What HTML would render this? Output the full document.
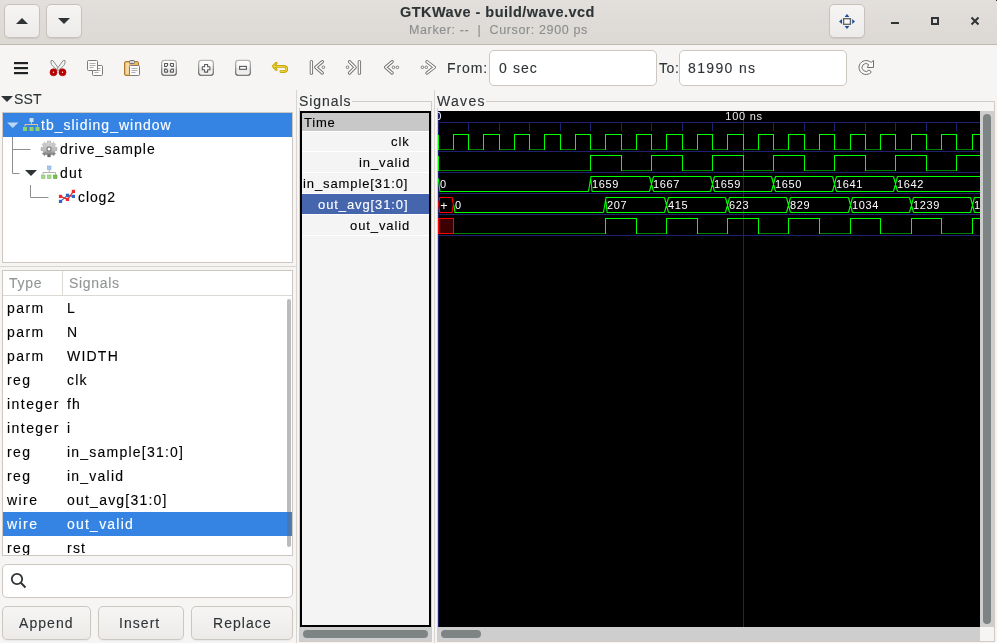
<!DOCTYPE html><html><head><meta charset="utf-8"><style>
*{margin:0;padding:0;box-sizing:border-box}
html,body{width:997px;height:643px;overflow:hidden;background:#f6f5f4;font-family:"Liberation Sans",sans-serif;color:#2e3436;position:relative}
.a{position:absolute}
.t{position:absolute;white-space:pre;line-height:1;will-change:transform;-webkit-text-stroke:0.12px currentColor}
</style></head><body><div class="a" style="left:0;top:0;width:997px;height:45px;background:linear-gradient(#e2dfdc,#dcd8d4);border-bottom:1px solid #c0b9b2"></div>
<div class="a" style="left:4px;top:4px;width:36px;height:34px;border-radius:5px;background:linear-gradient(#f6f5f4,#edebe9);border:1px solid #c9c2bc;box-shadow:0 1px 1px rgba(0,0,0,0.07)"></div>
<div class="a" style="left:46px;top:4px;width:36px;height:34px;border-radius:5px;background:linear-gradient(#f6f5f4,#edebe9);border:1px solid #c9c2bc;box-shadow:0 1px 1px rgba(0,0,0,0.07)"></div>
<div class="a" style="left:829px;top:4px;width:36px;height:34px;border-radius:5px;background:linear-gradient(#f6f5f4,#edebe9);border:1px solid #c9c2bc;box-shadow:0 1px 1px rgba(0,0,0,0.07)"></div>
<svg class="a" style="left:0;top:0" width="100" height="45"><polygon points="16,24 28,24 22,18" fill="#2e3436"/><polygon points="58,18 70,18 64,24" fill="#2e3436"/></svg>
<div class="t" style="left:400px;top:5.08px;font-size:14.5px;color:#2e3436;font-weight:700;letter-spacing:0.45px;">GTKWave - build/wave.vcd</div>
<div class="t" style="left:408.5px;top:23.86px;font-size:12.5px;color:#8b8e8f;font-weight:400;letter-spacing:0.62px;">Marker: --  |  Cursor: 2900 ps</div>
<svg class="a" style="left:830px;top:5px" width="34" height="32">
<rect x="13.6" y="13.7" width="6.8" height="5.6" fill="#fafafa" stroke="#5f5f5f" stroke-width="1.3"/>
<polygon points="17,9 14.6,11.9 19.4,11.9" fill="#1e4e9a"/>
<polygon points="17,23.9 14.6,21 19.4,21" fill="#1e4e9a"/>
<polygon points="9,16.5 12,14.1 12,18.9" fill="#1e4e9a"/>
<polygon points="25,16.5 22.2,14.1 22.2,18.9" fill="#1e4e9a"/>
</svg>
<svg class="a" style="left:880px;top:0" width="117" height="45">
<rect x="11" y="22" width="8" height="2" fill="#2e3436"/>
<rect x="52" y="18" width="6" height="6" fill="none" stroke="#2e3436" stroke-width="2"/>
<path d="M91.5,17.5 L98.5,24.5 M98.5,17.5 L91.5,24.5" stroke="#2e3436" stroke-width="2"/>
<rect x="116" y="0" width="1" height="1" fill="#333"/>
</svg>
<svg class="a" style="left:13px;top:59px" width="17" height="18" viewBox="0 0 17 18"><rect x="1" y="3" width="14" height="2.2" fill="#1f2324"/><rect x="1" y="8" width="14" height="2.2" fill="#1f2324"/><rect x="1" y="13" width="14" height="2.2" fill="#1f2324"/></svg>
<svg class="a" style="left:49px;top:59px" width="18" height="18" viewBox="0 0 18 18"><path d="M2,1.5 L3.8,1.5 L10.2,10.2 L9,11.5 Q2,6.5 2,4 Z" fill="#f2f2f0" stroke="#8c8c8a" stroke-width="1" stroke-linejoin="round"/>
<path d="M16,1.5 L14.2,1.5 L7.8,10.2 L9,11.5 Q16,6.5 16,4 Z" fill="#f2f2f0" stroke="#8c8c8a" stroke-width="1" stroke-linejoin="round"/>
<circle cx="4.5" cy="13.3" r="3.5" fill="#cc0000" stroke="#a40000" stroke-width="0.7"/>
<circle cx="13.5" cy="13.3" r="3.5" fill="#cc0000" stroke="#a40000" stroke-width="0.7"/>
<circle cx="4.5" cy="13.3" r="1.7" fill="none" stroke="#a00000" stroke-width="0.9"/><circle cx="13.5" cy="13.3" r="1.7" fill="none" stroke="#a00000" stroke-width="0.9"/>
<circle cx="4.5" cy="13.3" r="0.7" fill="#ffffff"/><circle cx="13.5" cy="13.3" r="0.7" fill="#ffffff"/></svg>
<svg class="a" style="left:86px;top:59px" width="18" height="18" viewBox="0 0 18 18"><rect x="6.5" y="6.5" width="10" height="10" rx="1" fill="#fbfbfb" stroke="#7c7c7c"/>
<path d="M8.5,9.5h6M8.5,11.5h6M8.5,13.5h4" stroke="#9a9a9a" stroke-width="0.8"/>
<rect x="1.5" y="1.5" width="10" height="10" rx="1" fill="#fbfbfb" stroke="#7c7c7c"/>
<path d="M3.5,4.5h6M3.5,6.5h6M3.5,8.5h4" stroke="#9a9a9a" stroke-width="0.8"/></svg>
<svg class="a" style="left:123px;top:59px" width="18" height="18" viewBox="0 0 18 18"><rect x="1.5" y="2.5" width="14" height="14" rx="1.5" fill="#e9b96e" stroke="#b07a2a"/>
<rect x="3" y="4" width="3" height="11" fill="#f3d9a8"/>
<rect x="6.5" y="1.5" width="5" height="3" rx="1" fill="#d8d8d8" stroke="#6c6c6c"/>
<rect x="6.5" y="6.5" width="10" height="10" rx="1" fill="#fbfbfb" stroke="#7c7c7c"/>
<path d="M8.5,9.5h6M8.5,11.5h6M8.5,13.5h4" stroke="#9a9a9a" stroke-width="0.8"/></svg>
<svg class="a" style="left:160px;top:59px" width="18" height="18" viewBox="0 0 18 18"><defs><linearGradient id="zfs" x1="0" y1="0" x2="0" y2="1"><stop offset="0" stop-color="#b4b4b2"/><stop offset="1" stop-color="#545452"/></linearGradient><linearGradient id="zff" x1="0" y1="0" x2="0" y2="1"><stop offset="0" stop-color="#ffffff"/><stop offset="0.5" stop-color="#f6f6f6"/><stop offset="0.55" stop-color="#e8e8e8"/><stop offset="1" stop-color="#f4f4f4"/></linearGradient></defs><rect x="1.7" y="1.4" width="14.6" height="14.9" rx="2.6" fill="url(#zff)" stroke="url(#zfs)" stroke-width="1.1"/><path d="M4.6,4.5h3v1.8l-1.2,1.2h-1.8z M13.4,4.5h-3v1.8l1.2,1.2h1.8z M4.6,13.1h3v-1.8l-1.2,-1.2h-1.8z M13.4,13.1h-3v-1.8l1.2,-1.2h1.8z" fill="#fcfcfc" stroke="#5a5a5a" stroke-width="1.1" stroke-linejoin="round"/></svg>
<svg class="a" style="left:197px;top:59px" width="18" height="18" viewBox="0 0 18 18"><defs><linearGradient id="zis" x1="0" y1="0" x2="0" y2="1"><stop offset="0" stop-color="#b4b4b2"/><stop offset="1" stop-color="#545452"/></linearGradient><linearGradient id="zif" x1="0" y1="0" x2="0" y2="1"><stop offset="0" stop-color="#ffffff"/><stop offset="0.5" stop-color="#f6f6f6"/><stop offset="0.55" stop-color="#e8e8e8"/><stop offset="1" stop-color="#f4f4f4"/></linearGradient></defs><rect x="1.7" y="1.4" width="14.6" height="14.9" rx="2.6" fill="url(#zif)" stroke="url(#zis)" stroke-width="1.1"/><path d="M7.6,5.5h3v2.3h2.3v3h-2.3v2.3h-3v-2.3h-2.3v-3h2.3z" fill="#fcfcfc" stroke="#5a5a5a" stroke-width="1.1" stroke-linejoin="round"/></svg>
<svg class="a" style="left:234px;top:59px" width="18" height="18" viewBox="0 0 18 18"><defs><linearGradient id="zos" x1="0" y1="0" x2="0" y2="1"><stop offset="0" stop-color="#b4b4b2"/><stop offset="1" stop-color="#545452"/></linearGradient><linearGradient id="zof" x1="0" y1="0" x2="0" y2="1"><stop offset="0" stop-color="#ffffff"/><stop offset="0.5" stop-color="#f6f6f6"/><stop offset="0.55" stop-color="#e8e8e8"/><stop offset="1" stop-color="#f4f4f4"/></linearGradient></defs><rect x="1.7" y="1.4" width="14.6" height="14.9" rx="2.6" fill="url(#zof)" stroke="url(#zos)" stroke-width="1.1"/><rect x="5.6" y="7.4" width="6.8" height="2.9" fill="#fcfcfc" stroke="#5a5a5a" stroke-width="1.1"/></svg>
<svg class="a" style="left:271px;top:59px" width="18" height="18" viewBox="0 0 18 18"><path d="M5.3,4.2 L2.1,7.4 L5.3,10.6 M2.6,7.4 H12.5 Q15.8,7.4 15.8,10 Q15.8,12.6 12.5,12.6 H9.8" stroke="#c4a000" stroke-width="2.6" fill="none" stroke-linejoin="round" stroke-linecap="round"/><path d="M5.3,4.2 L2.1,7.4 L5.3,10.6 M2.6,7.4 H12.5 Q15.8,7.4 15.8,10 Q15.8,12.6 12.5,12.6 H9.8" stroke="#f4dc40" stroke-width="1" fill="none" stroke-linejoin="round" stroke-linecap="round"/></svg>
<svg class="a" style="left:308px;top:59px" width="18" height="18" viewBox="0 0 18 18"><path d="M3.4,2.6V14.2" stroke="#6e6e6e" stroke-width="3.3" fill="none" stroke-linecap="round" stroke-linejoin="round"/><path d="M3.4,2.6V14.2" stroke="#fafafa" stroke-width="1.5" fill="none" stroke-linecap="round" stroke-linejoin="round"/><path d="M14.3,2.7L7.8,8.3L14.3,14" stroke="#6e6e6e" stroke-width="3.3" fill="none" stroke-linecap="round" stroke-linejoin="round"/><path d="M14.3,2.7L7.8,8.3L14.3,14" stroke="#fafafa" stroke-width="1.5" fill="none" stroke-linecap="round" stroke-linejoin="round"/><circle cx="15.4" cy="8.3" r="1.3" fill="#fafafa" stroke="#6e6e6e" stroke-width="0.9"/></svg>
<svg class="a" style="left:345px;top:59px" width="18" height="18" viewBox="0 0 18 18"><path d="M14.4,2.6V14.2" stroke="#6e6e6e" stroke-width="3.3" fill="none" stroke-linecap="round" stroke-linejoin="round"/><path d="M14.4,2.6V14.2" stroke="#fafafa" stroke-width="1.5" fill="none" stroke-linecap="round" stroke-linejoin="round"/><path d="M4.5,2.7L10.1,8.3L4.5,14" stroke="#6e6e6e" stroke-width="3.3" fill="none" stroke-linecap="round" stroke-linejoin="round"/><path d="M4.5,2.7L10.1,8.3L4.5,14" stroke="#fafafa" stroke-width="1.5" fill="none" stroke-linecap="round" stroke-linejoin="round"/><circle cx="2.5" cy="8.3" r="1.3" fill="#fafafa" stroke="#6e6e6e" stroke-width="0.9"/></svg>
<svg class="a" style="left:382px;top:59px" width="18" height="18" viewBox="0 0 18 18"><path d="M10.1,2.7L3.6,8.3L10.1,14" stroke="#6e6e6e" stroke-width="3.3" fill="none" stroke-linecap="round" stroke-linejoin="round"/><path d="M10.1,2.7L3.6,8.3L10.1,14" stroke="#fafafa" stroke-width="1.5" fill="none" stroke-linecap="round" stroke-linejoin="round"/><circle cx="11.5" cy="8.3" r="1.3" fill="#fafafa" stroke="#6e6e6e" stroke-width="0.9"/><circle cx="15.4" cy="8.3" r="1.3" fill="#fafafa" stroke="#6e6e6e" stroke-width="0.9"/></svg>
<svg class="a" style="left:419px;top:59px" width="18" height="18" viewBox="0 0 18 18"><path d="M8,2.7L15.3,8.3L8,14" stroke="#6e6e6e" stroke-width="3.3" fill="none" stroke-linecap="round" stroke-linejoin="round"/><path d="M8,2.7L15.3,8.3L8,14" stroke="#fafafa" stroke-width="1.5" fill="none" stroke-linecap="round" stroke-linejoin="round"/><circle cx="3.4" cy="8.3" r="1.3" fill="#fafafa" stroke="#6e6e6e" stroke-width="0.9"/><circle cx="7.3" cy="8.3" r="1.3" fill="#fafafa" stroke="#6e6e6e" stroke-width="0.9"/></svg>
<div class="t" style="left:447.3px;top:60.53px;font-size:14px;color:#2e3436;font-weight:400;letter-spacing:0.9px;">From:</div>
<div class="a" style="left:489px;top:50px;width:168px;height:36px;background:#fff;border:1px solid #cdc7c2;border-radius:5px"></div>
<div class="t" style="left:498.5px;top:60.53px;font-size:14px;color:#2e3436;font-weight:400;letter-spacing:1.1px;">0 sec</div>
<div class="t" style="left:659px;top:60.53px;font-size:14px;color:#2e3436;font-weight:400;letter-spacing:0.6px;">To:</div>
<div class="a" style="left:679px;top:50px;width:168px;height:36px;background:#fff;border:1px solid #cdc7c2;border-radius:5px"></div>
<div class="t" style="left:688.2px;top:60.53px;font-size:14px;color:#2e3436;font-weight:400;letter-spacing:1.35px;">81990 ns</div>
<svg class="a" style="left:857px;top:59px" width="18" height="18" viewBox="0 0 18 18"><path d="M12.5,2.44 A7,7 0 1 0 14.36,13 L12.06,11.07 A4,4 0 1 1 11.57,5.44 L10.5,8.5 H16.5 V1.5 L14.3,3.3 Z" fill="#fbfbfb" stroke="#707070" stroke-width="1" stroke-linejoin="round"/></svg>
<svg class="a" style="left:0;top:90px" width="16" height="16"><polygon points="1,6 13,6 7,12" fill="#2e3436"/></svg>
<div class="t" style="left:14.2px;top:91.53px;font-size:14px;color:#2e3436;font-weight:400;letter-spacing:0.2px;">SST</div>
<div class="a" style="left:2px;top:112px;width:291px;height:151px;background:#fff;border:1px solid #cdc7c2"></div>
<div class="a" style="left:3px;top:113px;width:289px;height:24px;background:#3584e4"></div>
<svg class="a" style="left:0;top:110px" width="100" height="100" viewBox="0 110 100 100">
<polygon points="7,122.5 18.5,122.5 12.75,128" fill="#bcd6f4"/>
<rect x="29.5" y="118" width="4" height="4" fill="#c8dcf0"/>
<path d="M25,126.5 V124.5 H37.5 V126.5 M31.5,122 V124.5" stroke="#d8c8a0" stroke-width="1" fill="none"/>
<rect x="23" y="127" width="4" height="4" fill="#8ed26e"/><rect x="29.5" y="127" width="4" height="4" fill="#8ed26e"/><rect x="35.5" y="127" width="4" height="4" fill="#8ed26e"/>
<path d="M12.5,137 V173.5 H19.5 M12.5,149.5 H30.5" stroke="#8e8e8e" stroke-width="1" fill="none"/>
<path d="M30.5,185 V197.5 H48.5" stroke="#8e8e8e" stroke-width="1" fill="none"/>
<polygon points="25,170 37,170 31,176" fill="#2e3436"/>
<rect x="47.5" y="166" width="3.5" height="3.5" fill="#a8c8f0" stroke="#78a8e0" stroke-width="0.6"/>
<path d="M43,174.5 V172.5 H55.5 V174.5 M49.25,169.5 V172.5" stroke="#b0b0b0" stroke-width="1" fill="none"/>
<rect x="41.5" y="175" width="3.5" height="3.5" fill="#a6d890" stroke="#7cc060" stroke-width="0.6"/>
<rect x="47.5" y="175" width="3.5" height="3.5" fill="#a6d890" stroke="#7cc060" stroke-width="0.6"/>
<rect x="53.5" y="175" width="3.5" height="3.5" fill="#78c050" stroke="#58a038" stroke-width="0.6"/>
<path d="M60.5,201.4 L67.5,195.3 L73.4,196.4" stroke="#2a68c8" stroke-width="1.2" fill="none"/>
<path d="M60.5,196.4 L67.5,199.4 L73.4,191.4" stroke="#f02828" stroke-width="1.2" fill="none"/>
<rect x="58.9" y="199.8" width="3.2" height="3.2" fill="#2a68c8"/>
<rect x="65.9" y="193.7" width="3.2" height="3.2" fill="#2a68c8"/>
<rect x="71.8" y="194.8" width="3.2" height="3.2" fill="#2a68c8"/>
<rect x="58.9" y="194.8" width="3.2" height="3.2" fill="#f02828"/>
<rect x="65.9" y="197.8" width="3.2" height="3.2" fill="#f02828"/>
<rect x="71.8" y="189.8" width="3.2" height="3.2" fill="#f02828"/>
</svg>
<svg class="a" style="left:40px;top:140px" width="18" height="18" viewBox="0 0 18 18">
<defs><linearGradient id="gg" gradientUnits="userSpaceOnUse" x1="0" y1="1" x2="0" y2="17"><stop offset="0" stop-color="#d6d6d6"/><stop offset="0.6" stop-color="#b8b8b8"/><stop offset="1" stop-color="#505050"/></linearGradient></defs>
<path d="M7.40,3.01 L7.45,1.05 L10.55,1.05 L10.60,3.01 L11.41,3.18 L12.10,3.63 L13.53,2.28 L15.72,4.47 L14.37,5.90 L14.82,6.59 L14.99,7.40 L16.95,7.45 L16.95,10.55 L14.99,10.60 L14.82,11.41 L14.37,12.10 L15.72,13.53 L13.53,15.72 L12.10,14.37 L11.41,14.82 L10.60,14.99 L10.55,16.95 L7.45,16.95 L7.40,14.99 L6.59,14.82 L5.90,14.37 L4.47,15.72 L2.28,13.53 L3.63,12.10 L3.18,11.41 L3.01,10.60 L1.05,10.55 L1.05,7.45 L3.01,7.40 L3.18,6.59 L3.63,5.90 L2.28,4.47 L4.47,2.28 L5.90,3.63 L6.59,3.18Z" fill="url(#gg)" stroke="#9a9a9a" stroke-width="0.5"/>
<circle cx="9" cy="9" r="2.6" fill="#7a7a7a"/>
<circle cx="9" cy="9" r="1.5" fill="#ffffff"/>
</svg>
<div class="t" style="left:41px;top:117.53px;font-size:14px;color:#ffffff;font-weight:400;letter-spacing:1px;">tb_sliding_window</div>
<div class="t" style="left:59.5px;top:141.53px;font-size:14px;color:#000000;font-weight:400;letter-spacing:1.05px;">drive_sample</div>
<div class="t" style="left:59.5px;top:165.53px;font-size:14px;color:#000000;font-weight:400;letter-spacing:1.2px;">dut</div>
<div class="t" style="left:77.5px;top:189.53px;font-size:14px;color:#000000;font-weight:400;letter-spacing:0.9px;">clog2</div>
<div class="a" style="left:0;top:266px;width:296px;height:1px;background:#d8d4d0"></div>
<div class="a" style="left:296px;top:90px;width:1px;height:553px;background:#d8d4d0"></div>
<div class="a" style="left:434px;top:90px;width:1px;height:553px;background:#d8d4d0"></div>
<div class="a" style="left:2px;top:270px;width:291px;height:286px;background:#fff;border:1px solid #cdc7c2;overflow:hidden"></div>
<div class="a" style="left:3px;top:295px;width:289px;height:1px;background:#dcd8d4"></div>
<div class="a" style="left:62px;top:271px;width:1px;height:24px;background:#dcd8d4"></div>
<div class="t" style="left:9px;top:275.53px;font-size:14px;color:#929595;font-weight:400;letter-spacing:0.7px;">Type</div>
<div class="t" style="left:69px;top:275.53px;font-size:14px;color:#929595;font-weight:400;letter-spacing:0.7px;">Signals</div>
<div class="a" style="left:3px;top:296px;width:289px;height:259px;overflow:hidden">
<div class="t" style="left:4.4px;top:4.53px;font-size:14px;color:#000000;letter-spacing:1.45px">parm</div>
<div class="t" style="left:64.4px;top:4.53px;font-size:14px;color:#000000;letter-spacing:1.22px">L</div>
<div class="t" style="left:4.4px;top:28.53px;font-size:14px;color:#000000;letter-spacing:1.45px">parm</div>
<div class="t" style="left:64.4px;top:28.53px;font-size:14px;color:#000000;letter-spacing:1.22px">N</div>
<div class="t" style="left:4.4px;top:52.53px;font-size:14px;color:#000000;letter-spacing:1.45px">parm</div>
<div class="t" style="left:64.4px;top:52.53px;font-size:14px;color:#000000;letter-spacing:1.22px">WIDTH</div>
<div class="t" style="left:4.4px;top:76.53px;font-size:14px;color:#000000;letter-spacing:1.45px">reg</div>
<div class="t" style="left:64.4px;top:76.53px;font-size:14px;color:#000000;letter-spacing:1.22px">clk</div>
<div class="t" style="left:4.4px;top:100.53px;font-size:14px;color:#000000;letter-spacing:1.45px">integer</div>
<div class="t" style="left:64.4px;top:100.53px;font-size:14px;color:#000000;letter-spacing:1.22px">fh</div>
<div class="t" style="left:4.4px;top:124.53px;font-size:14px;color:#000000;letter-spacing:1.45px">integer</div>
<div class="t" style="left:64.4px;top:124.53px;font-size:14px;color:#000000;letter-spacing:1.22px">i</div>
<div class="t" style="left:4.4px;top:148.53px;font-size:14px;color:#000000;letter-spacing:1.45px">reg</div>
<div class="t" style="left:64.4px;top:148.53px;font-size:14px;color:#000000;letter-spacing:1.22px">in_sample[31:0]</div>
<div class="t" style="left:4.4px;top:172.53px;font-size:14px;color:#000000;letter-spacing:1.45px">reg</div>
<div class="t" style="left:64.4px;top:172.53px;font-size:14px;color:#000000;letter-spacing:1.22px">in_valid</div>
<div class="t" style="left:4.4px;top:196.53px;font-size:14px;color:#000000;letter-spacing:1.45px">wire</div>
<div class="t" style="left:64.4px;top:196.53px;font-size:14px;color:#000000;letter-spacing:1.22px">out_avg[31:0]</div>
<div class="a" style="left:0;top:216px;width:289px;height:24px;background:#3584e4"></div>
<div class="t" style="left:4.4px;top:220.53px;font-size:14px;color:#ffffff;letter-spacing:1.45px">wire</div>
<div class="t" style="left:64.4px;top:220.53px;font-size:14px;color:#ffffff;letter-spacing:1.22px">out_valid</div>
<div class="t" style="left:4.4px;top:244.53px;font-size:14px;color:#000000;letter-spacing:1.45px">reg</div>
<div class="t" style="left:64.4px;top:244.53px;font-size:14px;color:#000000;letter-spacing:1.22px">rst</div>
</div>
<div class="a" style="left:287px;top:299px;width:4px;height:248px;background:rgba(100,104,106,0.45);border-radius:2px"></div>
<div class="a" style="left:2px;top:564px;width:291px;height:34px;background:#fff;border:1px solid #cdc7c2;border-radius:5px"></div>
<svg class="a" style="left:9px;top:571px" width="20" height="20"><circle cx="8" cy="8" r="5.2" fill="none" stroke="#2e3436" stroke-width="1.8"/><path d="M11.8,11.8 L16.5,16.5" stroke="#2e3436" stroke-width="2"/></svg>
<div class="a" style="left:2px;top:606px;width:89px;height:34px;border-radius:5px;background:linear-gradient(#f6f5f4,#edebe9);border:1px solid #cdc7c2;box-shadow:0 1px 1px rgba(0,0,0,0.05)"></div>
<div class="t" style="left:18.8px;top:615.53px;font-size:14px;color:#2e3436;font-weight:400;letter-spacing:1.05px;">Append</div>
<div class="a" style="left:98px;top:606px;width:86px;height:34px;border-radius:5px;background:linear-gradient(#f6f5f4,#edebe9);border:1px solid #cdc7c2;box-shadow:0 1px 1px rgba(0,0,0,0.05)"></div>
<div class="t" style="left:119.3px;top:615.53px;font-size:14px;color:#2e3436;font-weight:400;letter-spacing:1.05px;">Insert</div>
<div class="a" style="left:191px;top:606px;width:102px;height:34px;border-radius:5px;background:linear-gradient(#f6f5f4,#edebe9);border:1px solid #cdc7c2;box-shadow:0 1px 1px rgba(0,0,0,0.05)"></div>
<div class="t" style="left:212.6px;top:615.53px;font-size:14px;color:#2e3436;font-weight:400;letter-spacing:1.05px;">Replace</div>
<div class="t" style="left:298.8px;top:93.53px;font-size:14px;color:#2e3436;font-weight:400;letter-spacing:0.95px;">Signals</div>
<svg class="a" style="left:296px;top:98px" width="140" height="20" viewBox="296 98 140 20"><path d="M352,101.5 H431.5 V111 M299.5,108 V111" stroke="#d0cbc6" stroke-width="1" fill="none"/></svg>
<svg class="a" style="left:296px;top:98px" width="140" height="545" viewBox="296 98 140 545"><path d="M299.5,108 V641.5 H431.5 V101" stroke="#d0cbc6" stroke-width="1" fill="none"/></svg>
<div class="a" style="left:300px;top:111px;width:131px;height:516px;background:#000"></div>
<div class="a" style="left:302px;top:113px;width:127px;height:512px;background:#f4f4f4"></div>
<div class="a" style="left:302px;top:113px;width:127px;height:18px;background:#c8c8c8"></div>
<div class="a" style="left:302px;top:131px;width:127px;height:1px;background:#ffffff"></div>
<div class="a" style="left:302px;top:151px;width:127px;height:1px;background:#ffffff"></div>
<div class="a" style="left:302px;top:172px;width:127px;height:1px;background:#ffffff"></div>
<div class="a" style="left:302px;top:193px;width:127px;height:1px;background:#ffffff"></div>
<div class="a" style="left:302px;top:214px;width:127px;height:1px;background:#ffffff"></div>
<div class="a" style="left:302px;top:235px;width:127px;height:1px;background:#ffffff"></div>
<div class="a" style="left:302px;top:194px;width:127px;height:20px;background:#4565ad"></div>
<div class="t" style="left:303.5px;top:115.92px;font-size:13px;color:#000000;font-weight:400;letter-spacing:0.8px;">Time</div>
<div class="t" style="right:587px;top:135.42px;font-size:13px;color:#000;letter-spacing:0.9px">clk</div>
<div class="t" style="right:586.8px;top:156.42px;font-size:13px;color:#000;letter-spacing:0.9px">in_valid</div>
<div class="t" style="right:588.4px;top:177.42px;font-size:13px;color:#000;letter-spacing:0.9px">in_sample[31:0]</div>
<div class="t" style="right:588.4px;top:198.42px;font-size:13px;color:#fff;letter-spacing:0.9px">out_avg[31:0]</div>
<div class="t" style="right:586.8px;top:219.42px;font-size:13px;color:#000;letter-spacing:0.9px">out_valid</div>
<div class="a" style="left:300px;top:627px;width:131px;height:14px;background:#cecece"></div>
<div class="a" style="left:303px;top:630px;width:125px;height:8px;background:#7e8384;border-radius:4px"></div>
<div class="t" style="left:437px;top:93.53px;font-size:14px;color:#2e3436;font-weight:400;letter-spacing:1.3px;">Waves</div>
<svg class="a" style="left:430px;top:98px" width="567" height="545" viewBox="430 98 567 545"><path d="M486,101.5 H994.5 V641.5 H437.5 V108" stroke="#d0cbc6" stroke-width="1" fill="none"/></svg>
<div class="a" style="left:980px;top:111px;width:14px;height:516px;background:#cecece"></div>
<div class="a" style="left:983px;top:114px;width:8px;height:510px;background:#7e8384;border-radius:4px"></div>
<div class="a" style="left:437px;top:627px;width:543px;height:14px;background:#cecece"></div>
<div class="a" style="left:441px;top:630px;width:40px;height:8px;background:#7e8384;border-radius:4px"></div>
<svg class="a" style="left:438px;top:111px;will-change:transform" width="542" height="516" viewBox="438 111 542 516" shape-rendering="crispEdges"><g stroke-width="1"><rect x="438" y="111" width="542" height="516" fill="#000"/><path d="M438,122.5H980" stroke="#202070"/><path d="M438.5,111V627" stroke="#202070"/><path d="M468.5,122V131" stroke="#202070"/><path d="M499.5,122V131" stroke="#202070"/><path d="M529.5,122V131" stroke="#202070"/><path d="M560.5,122V131" stroke="#202070"/><path d="M590.5,122V131" stroke="#202070"/><path d="M621.5,122V131" stroke="#202070"/><path d="M651.5,122V131" stroke="#202070"/><path d="M682.5,122V131" stroke="#202070"/><path d="M712.5,122V131" stroke="#202070"/><path d="M743.5,111V627" stroke="#202070"/><path d="M773.5,122V131" stroke="#202070"/><path d="M804.5,122V131" stroke="#202070"/><path d="M834.5,122V131" stroke="#202070"/><path d="M865.5,122V131" stroke="#202070"/><path d="M895.5,122V131" stroke="#202070"/><path d="M926.5,122V131" stroke="#202070"/><path d="M956.5,122V131" stroke="#202070"/><path d="M438,151.5H980" stroke="#202070"/><path d="M438,172.5H980" stroke="#202070"/><path d="M438,193.5H980" stroke="#202070"/><path d="M438,214.5H980" stroke="#202070"/><path d="M438,235.5H980" stroke="#202070"/><text x="435.2" y="120" font-size="11" fill="#ffffff" font-family="Liberation Sans">0</text><text x="725.3" y="120" font-size="11" fill="#e8e8e8" font-family="Liberation Sans" letter-spacing="0.75">100 ns</text><path d="M438.5,149.5H453.5M468.5,149.5H483.5M499.5,149.5H514.5M529.5,149.5H544.5M560.5,149.5H575.5M590.5,149.5H605.5M621.5,149.5H636.5M651.5,149.5H666.5M682.5,149.5H697.5M712.5,149.5H727.5M743.5,149.5H758.5M773.5,149.5H788.5M804.5,149.5H819.5M834.5,149.5H850.5M865.5,149.5H880.5M895.5,149.5H911.5M926.5,149.5H941.5M956.5,149.5H972.5M987.5,149.5H980" stroke="#008000" fill="none"/><path d="M438.5,134.5V149.5M453.5,149.5V134.5H468.5V149.5M483.5,149.5V134.5H499.5V149.5M514.5,149.5V134.5H529.5V149.5M544.5,149.5V134.5H560.5V149.5M575.5,149.5V134.5H590.5V149.5M605.5,149.5V134.5H621.5V149.5M636.5,149.5V134.5H651.5V149.5M666.5,149.5V134.5H682.5V149.5M697.5,149.5V134.5H712.5V149.5M727.5,149.5V134.5H743.5V149.5M758.5,149.5V134.5H773.5V149.5M788.5,149.5V134.5H804.5V149.5M819.5,149.5V134.5H834.5V149.5M850.5,149.5V134.5H865.5V149.5M880.5,149.5V134.5H895.5V149.5M911.5,149.5V134.5H926.5V149.5M941.5,149.5V134.5H956.5V149.5M972.5,149.5V134.5H987.5V149.5" stroke="#00ff00" fill="none"/><path d="M438.5,170.5H590.5M621.5,170.5H651.5M682.5,170.5H712.5M743.5,170.5H773.5M804.5,170.5H834.5M865.5,170.5H895.5M926.5,170.5H956.5M987.5,170.5H980" stroke="#008000" fill="none"/><path d="M438.5,155.5V170.5M590.5,170.5V155.5H621.5V170.5M651.5,170.5V155.5H682.5V170.5M712.5,170.5V155.5H743.5V170.5M773.5,170.5V155.5H804.5V170.5M834.5,170.5V155.5H865.5V170.5M895.5,170.5V155.5H926.5V170.5M956.5,170.5V155.5H987.5V170.5" stroke="#00ff00" fill="none"/><path d="M438.5,233.5H605.5M636.5,233.5H666.5M697.5,233.5H727.5M758.5,233.5H788.5M819.5,233.5H850.5M880.5,233.5H911.5M941.5,233.5H972.5M1002.5,233.5H980" stroke="#008000" fill="none"/><path d="M438.5,218.5V233.5M605.5,233.5V218.5H636.5V233.5M666.5,233.5V218.5H697.5V233.5M727.5,233.5V218.5H758.5V233.5M788.5,233.5V218.5H819.5V233.5M850.5,233.5V218.5H880.5V233.5M911.5,233.5V218.5H941.5V233.5M972.5,233.5V218.5H1002.5V233.5" stroke="#00ff00" fill="none"/><text x="440" y="188.0" font-size="11" fill="#ffffff" font-family="Liberation Sans" letter-spacing="0.62">0</text><text x="592" y="188.0" font-size="11" fill="#ffffff" font-family="Liberation Sans" letter-spacing="0.62">1659</text><text x="653" y="188.0" font-size="11" fill="#ffffff" font-family="Liberation Sans" letter-spacing="0.62">1667</text><text x="714" y="188.0" font-size="11" fill="#ffffff" font-family="Liberation Sans" letter-spacing="0.62">1659</text><text x="775" y="188.0" font-size="11" fill="#ffffff" font-family="Liberation Sans" letter-spacing="0.62">1650</text><text x="836" y="188.0" font-size="11" fill="#ffffff" font-family="Liberation Sans" letter-spacing="0.62">1641</text><text x="897" y="188.0" font-size="11" fill="#ffffff" font-family="Liberation Sans" letter-spacing="0.62">1642</text><path d="M438.3,178.5L440,191.5H588.5M588.5,191.5L591,176.5H592.5M590.9,179.5L592.1,191.5H592.5M592.5,176.5H649.5M592.5,191.5H649.5M649.5,176.5L653.5,191.5M649.5,191.5L653.5,176.5M653.5,176.5H710.5M653.5,191.5H710.5M710.5,176.5L714.5,191.5M710.5,191.5L714.5,176.5M714.5,176.5H771.5M714.5,191.5H771.5M771.5,176.5L775.5,191.5M771.5,191.5L775.5,176.5M775.5,176.5H832.5M775.5,191.5H832.5M832.5,176.5L836.5,191.5M832.5,191.5L836.5,176.5M836.5,176.5H893.5M836.5,191.5H893.5M893.5,176.5L897.5,191.5M893.5,191.5L897.5,176.5M897.5,176.5H983M897.5,191.5H983" stroke="#00ff00" fill="none" shape-rendering="geometricPrecision" stroke-width="1.1"/><text x="455" y="209.0" font-size="11" fill="#ffffff" font-family="Liberation Sans" letter-spacing="0.62">0</text><text x="607" y="209.0" font-size="11" fill="#ffffff" font-family="Liberation Sans" letter-spacing="0.62">207</text><text x="668" y="209.0" font-size="11" fill="#ffffff" font-family="Liberation Sans" letter-spacing="0.62">415</text><text x="729" y="209.0" font-size="11" fill="#ffffff" font-family="Liberation Sans" letter-spacing="0.62">623</text><text x="790" y="209.0" font-size="11" fill="#ffffff" font-family="Liberation Sans" letter-spacing="0.62">829</text><text x="852" y="209.0" font-size="11" fill="#ffffff" font-family="Liberation Sans" letter-spacing="0.62">1034</text><text x="913" y="209.0" font-size="11" fill="#ffffff" font-family="Liberation Sans" letter-spacing="0.62">1239</text><text x="974" y="209.0" font-size="11" fill="#ffffff" font-family="Liberation Sans" letter-spacing="0.62">1239</text><path d="M453.8,205L455,212.5H603.5M603.5,212.5L606,197.5H607.5M605.9,200.5L607.1,212.5H607.5M607.5,197.5H664.5M607.5,212.5H664.5M664.5,197.5L668.5,212.5M664.5,212.5L668.5,197.5M668.5,197.5H725.5M668.5,212.5H725.5M725.5,197.5L729.5,212.5M725.5,212.5L729.5,197.5M729.5,197.5H786.5M729.5,212.5H786.5M786.5,197.5L790.5,212.5M786.5,212.5L790.5,197.5M790.5,197.5H848.5M790.5,212.5H848.5M848.5,197.5L852.5,212.5M848.5,212.5L852.5,197.5M852.5,197.5H909.5M852.5,212.5H909.5M909.5,197.5L913.5,212.5M909.5,212.5L913.5,197.5M913.5,197.5H970.5M913.5,212.5H970.5M970.5,197.5L974.5,212.5M970.5,212.5L974.5,197.5M974.5,197.5H983M974.5,212.5H983" stroke="#00ff00" fill="none" shape-rendering="geometricPrecision" stroke-width="1.1"/><path d="M438.5,204.5 L439.8,197.5 H452 L453.3,204.5 L452,212.5 H439.8 Z" stroke="#ff0000" fill="none" shape-rendering="geometricPrecision" stroke-width="1.1"/><text x="440.3" y="209.6" font-size="12.5" fill="#ffffff" font-family="Liberation Sans">+</text><rect x="438.5" y="218.5" width="15" height="15" fill="#3c0000" stroke="#ff0000"/></g></svg></body></html>
